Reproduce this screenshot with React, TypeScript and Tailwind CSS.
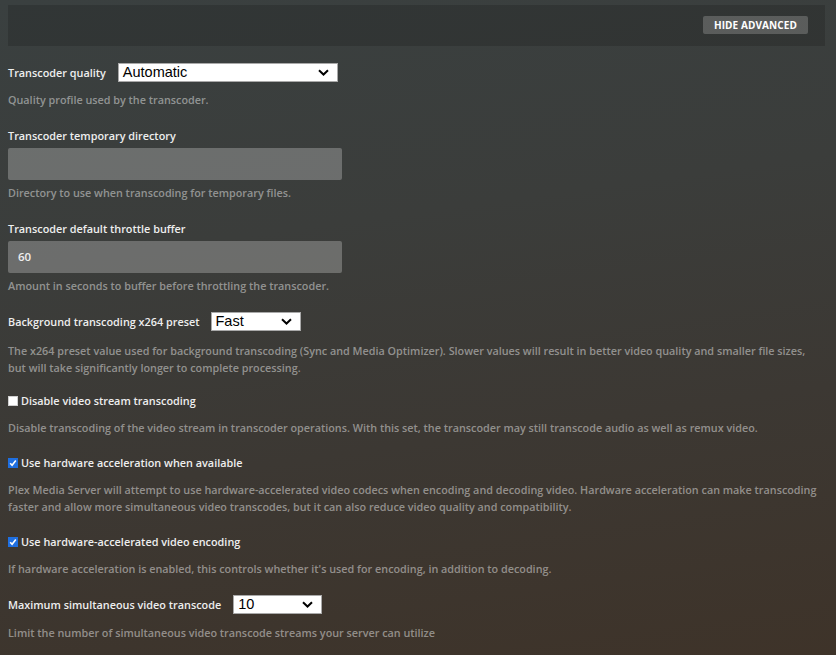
import React from "react";

const Chevron = () => (
  <svg width="11" height="7" viewBox="0 0 11 7" className="shrink-0">
    <path d="M1 1.2 L5.5 5.5 L10 1.2" fill="none" stroke="#000" strokeWidth="2" />
  </svg>
);

const Select = ({ value, w }: { value: string; w: string }) => (
  <div
    className={`${w} h-[19px] bg-white border border-[#a9a9a9] flex items-center justify-between pl-[4px] pr-[8px] text-black text-[14.5px] leading-none`}
    style={{ fontFamily: '"Liberation Sans", Arial, sans-serif' }}
  >
    <span>{value}</span>
    <Chevron />
  </div>
);

const Check = ({ checked }: { checked: boolean }) =>
  checked ? (
    <span className="w-[10px] h-[10px] bg-[#1f6fe0] flex items-center justify-center shrink-0">
      <svg width="8" height="8" viewBox="0 0 8 8">
        <path d="M1.2 4.2 L3.1 6.2 L6.8 1.4" fill="none" stroke="#fff" strokeWidth="1.6" />
      </svg>
    </span>
  ) : (
    <span className="w-[10px] h-[10px] bg-white border border-[#cfcfcf] shrink-0" />
  );

const Label = ({ children }: { children: React.ReactNode }) => (
  <div className="text-[10.85px] leading-[17px] text-[#eeeeee] font-semibold whitespace-nowrap">{children}</div>
);

const Desc = ({ children, mt }: { children: React.ReactNode; mt: string }) => (
  <div className={`${mt} text-[10.8px] leading-[17px] text-white/45 font-semibold whitespace-nowrap`}>{children}</div>
);

export default function App() {
  return (
    <div
      className="w-full min-h-[655px] h-screen overflow-hidden bg-[linear-gradient(172deg,#3a4040_0%,#3b3d3b_35%,#3c3833_65%,#3e3329_100%)] pl-[8px] pr-[11px] pt-[5px]"
      style={{ fontFamily: '"Open Sans", "Noto Sans", sans-serif' }}
    >
      <div className="h-[41px] bg-black/15 flex items-center justify-end pr-[17px]">
        <button className="h-[18px] w-[105px] rounded-[2px] bg-white/20 text-white text-[10px] font-bold tracking-[0.1px] flex items-center justify-center mt-[-1px]">
          HIDE ADVANCED
        </button>
      </div>

      {/* Block 1 */}
      <div className="mt-[17px] flex items-center h-[19px]">
        <Label>Transcoder quality</Label>
        <div className="ml-[12px]">
          <Select value="Automatic" w="w-[220px]" />
        </div>
      </div>
      <Desc mt="mt-[9px]">Quality profile used by the transcoder.</Desc>

      {/* Block 2 */}
      <div className="mt-[18.5px]">
        <Label>Transcoder temporary directory</Label>
      </div>
      <div className="mt-[4px] w-[334px] h-[32px] rounded-[2px] bg-white/25" />
      <Desc mt="mt-[4px]">Directory to use when transcoding for temporary files.</Desc>

      {/* Block 3 */}
      <div className="mt-[19px]">
        <Label>Transcoder default throttle buffer</Label>
      </div>
      <div className="mt-[4px] w-[334px] h-[32px] rounded-[2px] bg-white/25 flex items-center pl-[10px] text-[11.5px] font-semibold text-[#eeeeee]">
        60
      </div>
      <Desc mt="mt-[4px]">Amount in seconds to buffer before throttling the transcoder.</Desc>

      {/* Block 4 */}
      <div className="mt-[18px] flex items-center h-[19px]">
        <Label>Background transcoding x264 preset</Label>
        <div className="ml-[11px]">
          <Select value="Fast" w="w-[90px]" />
        </div>
      </div>
      <Desc mt="mt-[11px]">
        The x264 preset value used for background transcoding (Sync and Media Optimizer). Slower values will result in better video quality and smaller file sizes,
        <br />
        but will take significantly longer to complete processing.
      </Desc>

      {/* Block 5 */}
      <div className="mt-[16.5px] flex items-center gap-[3px]">
        <Check checked={false} />
        <Label>Disable video stream transcoding</Label>
      </div>
      <Desc mt="mt-[10px]">
        Disable transcoding of the video stream in transcoder operations. With this set, the transcoder may still transcode audio as well as remux video.
      </Desc>

      {/* Block 6 */}
      <div className="mt-[18px] flex items-center gap-[3px]">
        <Check checked={true} />
        <Label>Use hardware acceleration when available</Label>
      </div>
      <Desc mt="mt-[10px]">
        Plex Media Server will attempt to use hardware-accelerated video codecs when encoding and decoding video. Hardware acceleration can make transcoding
        <br />
        faster and allow more simultaneous video transcodes, but it can also reduce video quality and compatibility.
      </Desc>

      {/* Block 7 */}
      <div className="mt-[18px] flex items-center gap-[3px]">
        <Check checked={true} />
        <Label>Use hardware-accelerated video encoding</Label>
      </div>
      <Desc mt="mt-[10px]">
        If hardware acceleration is enabled, this controls whether it's used for encoding, in addition to decoding.
      </Desc>

      {/* Block 8 */}
      <div className="mt-[18px] flex items-center h-[19px]">
        <Label>Maximum simultaneous video transcode</Label>
        <div className="ml-[12px]">
          <Select value="10" w="w-[89px]" />
        </div>
      </div>
      <Desc mt="mt-[10px]">Limit the number of simultaneous video transcode streams your server can utilize</Desc>
    </div>
  );
}
